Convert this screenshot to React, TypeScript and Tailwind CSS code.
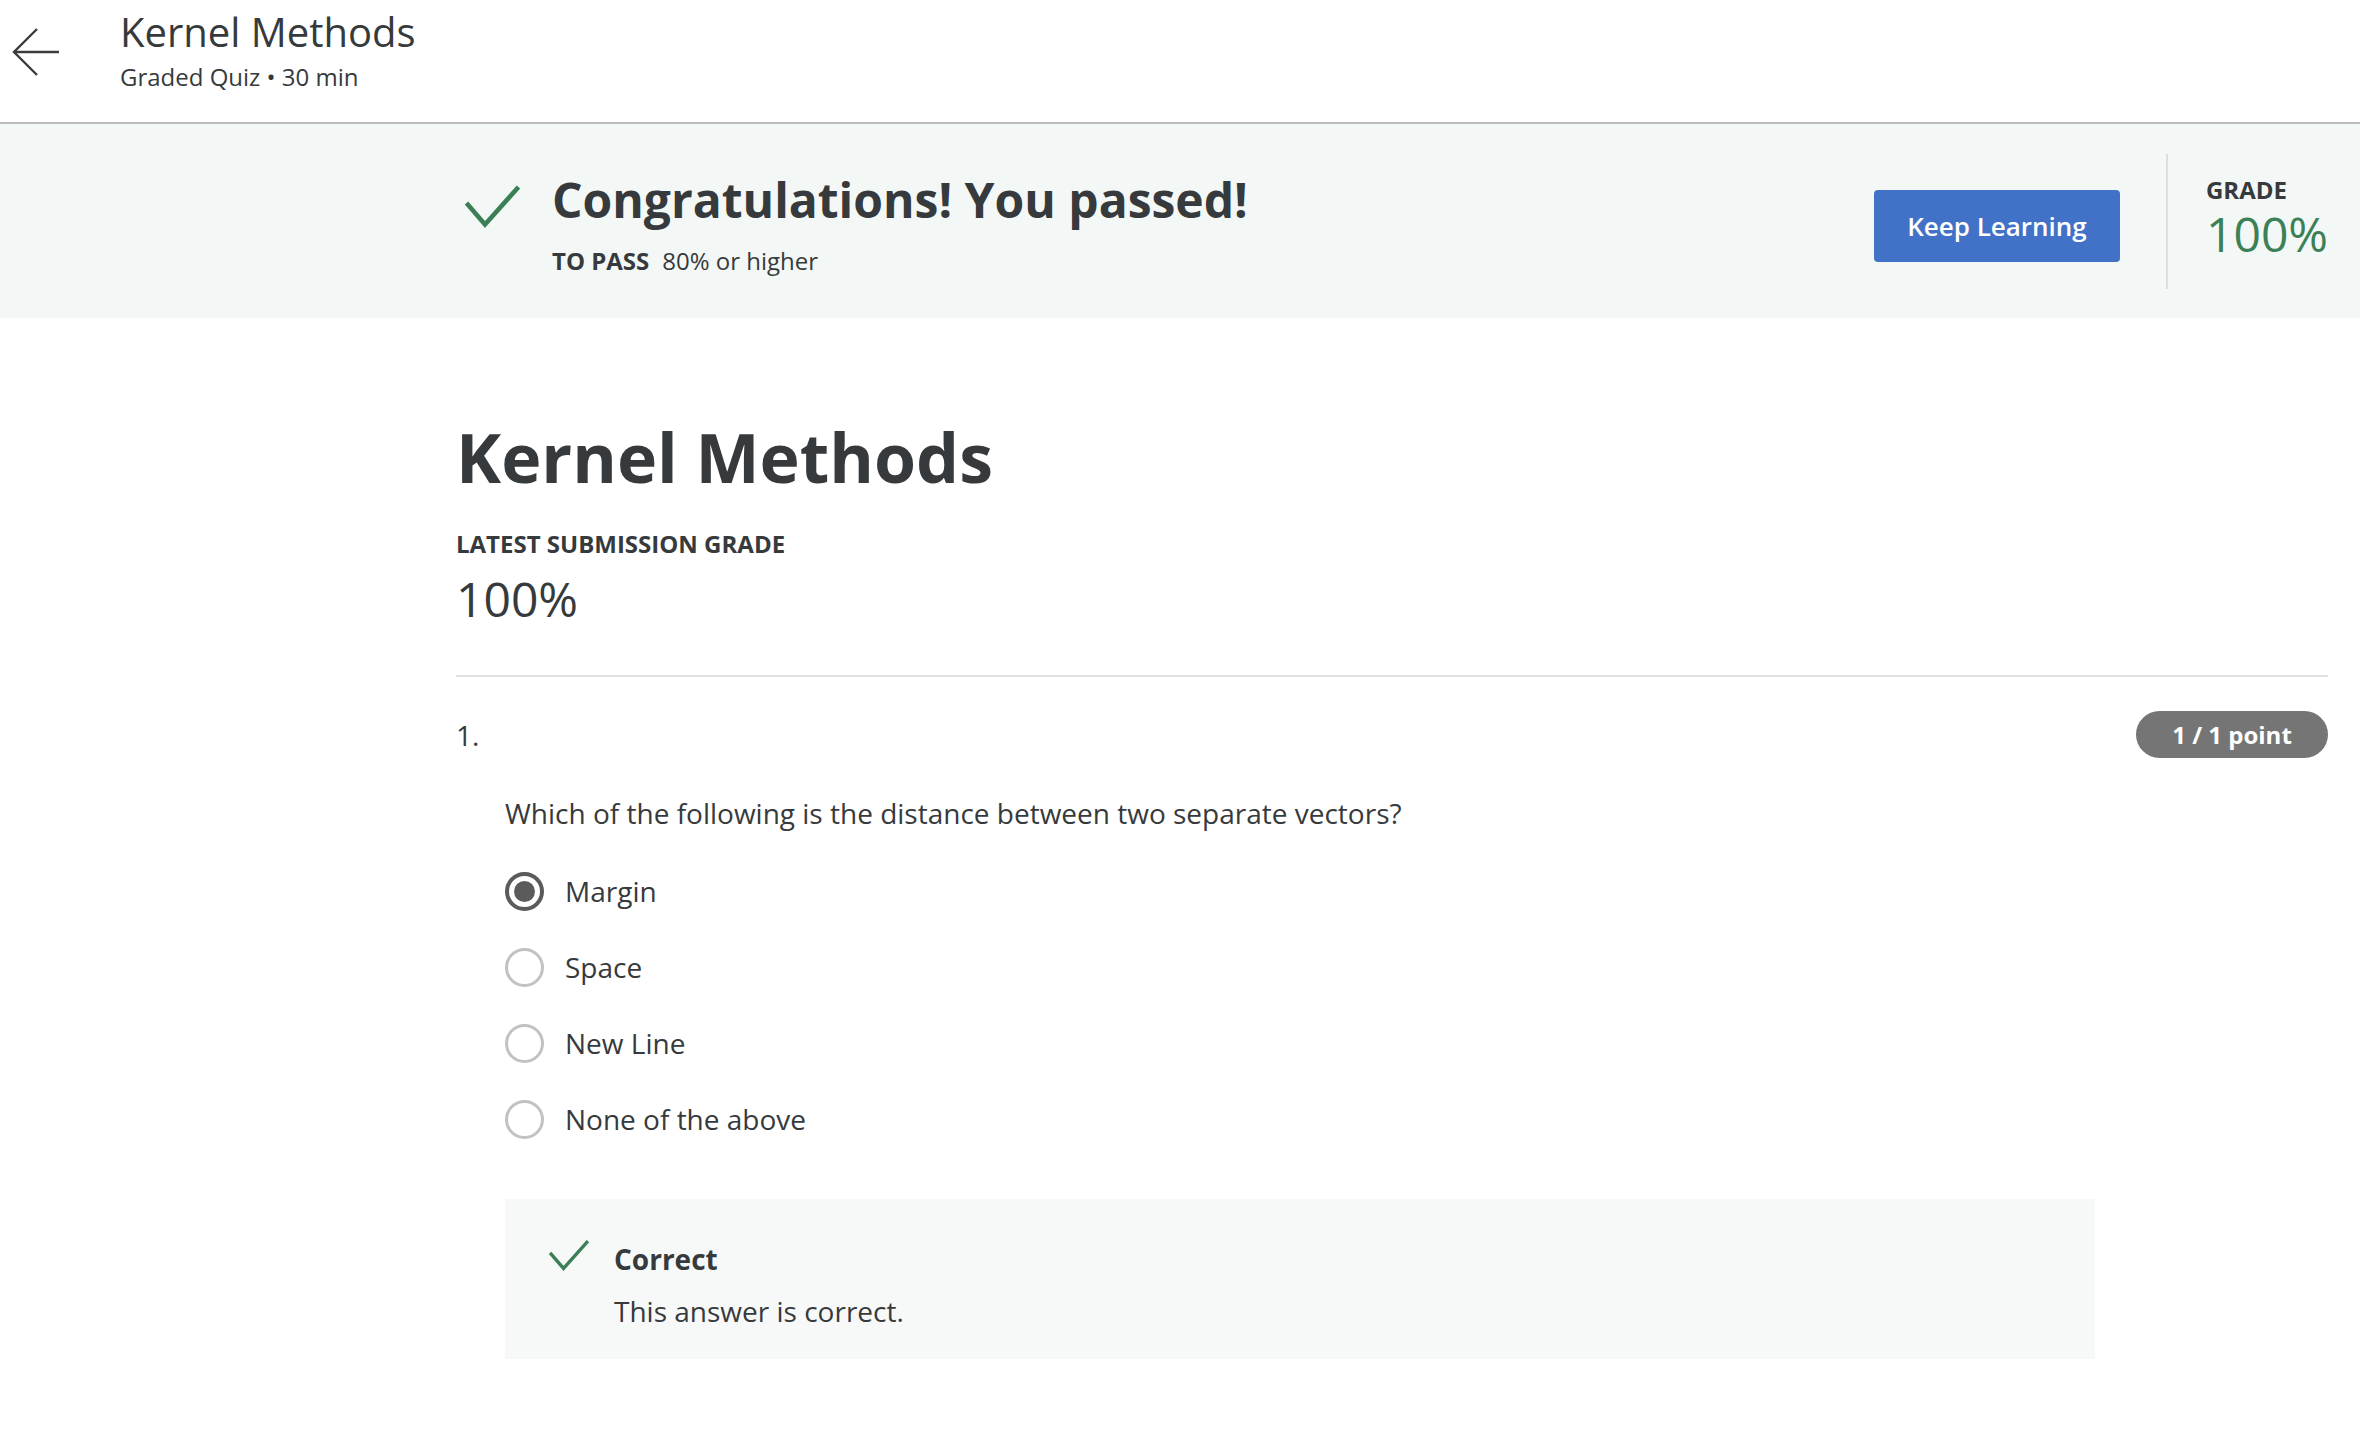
import { useState } from 'react';

const options = ['Margin', 'Space', 'New Line', 'None of the above'];

const CheckMark = ({ className }: { className?: string }) => (
  <svg viewBox="0 0 57 44" className={className} fill="none">
    <path d="M2.5 19 L21 40.5 L54.5 3" stroke="#3b7f56" strokeWidth="4.6" />
  </svg>
);

const Radio = ({ checked }: { checked: boolean }) =>
  checked ? (
    <span className="flex h-[39px] w-[39px] items-center justify-center rounded-full border-[4px] border-[#5b5b5b]">
      <span className="h-[21px] w-[21px] rounded-full bg-[#5b5b5b]" />
    </span>
  ) : (
    <span className="h-[39px] w-[39px] rounded-full border-[3px] border-[#c2c2c2]" />
  );

export default function App() {
  const [selected] = useState(0);

  return (
    <div className="min-h-[1446px] bg-white text-[#373a3c]" style={{ fontFamily: '"Open Sans", "Noto Sans", sans-serif' }}>
      {/* Top bar */}
      <header className="flex h-[124px] border-b-2 border-[#bdbdbd]">
        <div className="w-[120px] pl-[12px] pt-[28px]">
          <svg viewBox="0 0 48 48" className="h-[48px] w-[48px]" fill="none" stroke="#3c3c3c" strokeWidth="2.4">
            <path d="M47 24 H2" />
            <path d="M25 1 L2 24 L25 47" />
          </svg>
        </div>
        <div className="pt-[8px]">
          <h1 className="text-[40px] leading-[48px]">Kernel Methods</h1>
          <p className="mt-[5px] text-[24px] leading-[32px]">Graded Quiz • 30 min</p>
        </div>
      </header>

      {/* Result banner */}
      <section className="h-[194px] bg-[#f3f8f6]">
        <div className="ml-[456px] flex h-full w-[1872px] items-center justify-between">
          <div className="flex items-start self-start pt-[48px]">
            <CheckMark className="ml-[8px] mt-[12px] h-[44px] w-[57px]" />
            <div className="ml-[31px]">
              <h2 className="text-[48px] font-bold leading-[56px]">Congratulations! You passed!</h2>
              <p className="mt-[18px] text-[24px] leading-[30px]">
                <span className="font-bold">TO PASS</span>
                <span className="ml-[13px]">80% or higher</span>
              </p>
            </div>
          </div>
          <div className="flex items-center">
            <button className="mt-[10px] h-[72px] w-[246px] rounded-[4px] bg-[#4272c7] text-[26px] font-semibold text-white">
              Keep Learning
            </button>
            <div className="ml-[46px] h-[135px] w-[2px] bg-[#dcdfde]" />
            <div className="ml-[38px] mt-[-6px] flex flex-col gap-[4px]">
              <div className="text-[24px] font-bold leading-[28px]">GRADE</div>
              <div className="text-[48px] leading-[52px] text-[#3b8056]">100%</div>
            </div>
          </div>
        </div>
      </section>

      {/* Main content */}
      <main className="ml-[456px] w-[1872px] pt-[99px]">
        <h1 className="text-[68px] font-bold leading-[80px]">Kernel Methods</h1>
        <div className="mt-[31px] text-[24px] font-bold leading-[32px]">LATEST SUBMISSION GRADE</div>
        <div className="mt-[11px] text-[48px] leading-[56px]">100%</div>
        <hr className="mt-[48px] border-t-2 border-[#e1e1e1]" />

        <div className="mt-[34px] flex items-center justify-between">
          <div className="text-[28px] leading-[36px]">1.</div>
          <span className="flex h-[47px] w-[192px] items-center justify-center rounded-full bg-[#757575] text-[24px] font-bold text-white">
            1 / 1 point
          </span>
        </div>

        <div className="ml-[49px]">
          <p className="mt-[37px] text-[28px] leading-[36px]">
            Which of the following is the distance between two separate vectors?
          </p>
          <div className="mt-[22px]">
            {options.map((o, i) => (
              <label key={o} className="flex h-[76px] items-center">
                <Radio checked={i === selected} />
                <span className="ml-[21px] text-[28px] leading-[36px]">{o}</span>
              </label>
            ))}
          </div>

          <div className="mt-[42px] flex h-[160px] w-[1590px] bg-[#f7f9f8] pl-[43px] pt-[42px]">
            <CheckMark className="mt-[-2px] h-[32px] w-[42px]" />
            <div className="ml-[24px]">
              <div className="text-[28px] font-bold leading-[36px]">Correct</div>
              <div className="mt-[16px] text-[28px] leading-[36px]">This answer is correct.</div>
            </div>
          </div>
        </div>
      </main>
    </div>
  );
}
